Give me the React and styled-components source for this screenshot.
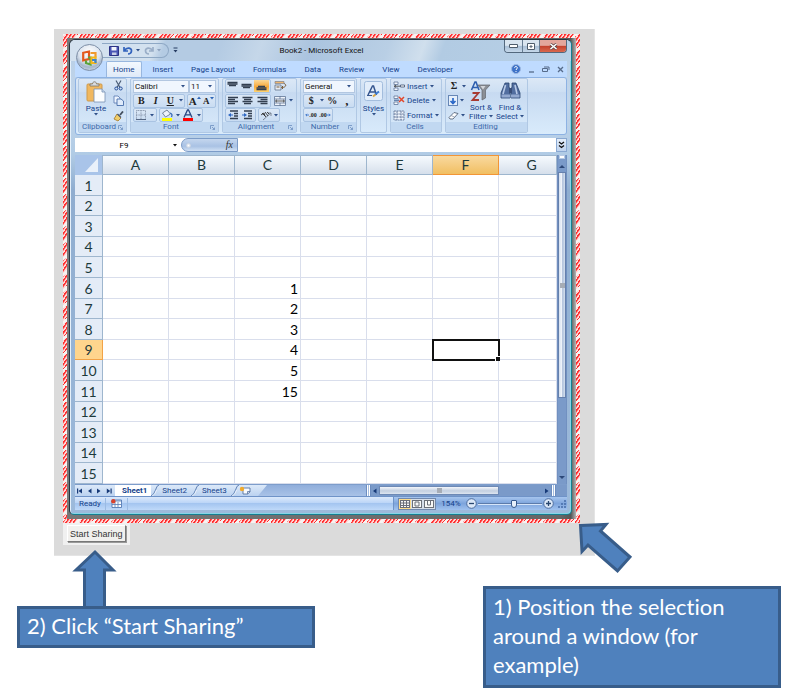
import React from "react";
import styled, { createGlobalStyle, css } from "styled-components";

const ui = 'Roboto, "Open Sans", sans-serif';
const sheet = 'Lato, "Open Sans", sans-serif';
const navy = "#15428b";
const icon = "#2f5088";

const GlobalStyle = createGlobalStyle`
  * { box-sizing: border-box; }
  body { margin: 0; background: #fff; font-family: ${ui}; }
  button, input, select { font: inherit; color: inherit; margin: 0; padding: 0; border: 0; background: none; min-width: 0; }
  svg { display: block; flex: none; }
`;

const Page = styled.main`padding: 29px 12px 6px 17px;`;

const Capture = styled.section`
  margin: 0 186px 0 37px;
  padding: 5px 14px 10px 9px;
  background: #dbdbdb;
  border: 1px solid #e4e4e4;
  border-width: 0 1px 1px 0;
`;

const Selection = styled.div`
  padding: 4px;
  background-color: #f6f3f2;
  background-image:
    linear-gradient(135deg, #f6f3f2 0 2px, transparent 2px 11px, #f6f3f2 11px),
    linear-gradient(135deg, #f6f3f2 0 2px, transparent 2px 11px, #f6f3f2 11px),
    linear-gradient(135deg, #f6f3f2 0 2px, transparent 2px 11px, #f6f3f2 11px),
    linear-gradient(135deg, #f6f3f2 0 2px, transparent 2px 11px, #f6f3f2 11px),
    repeating-linear-gradient(125deg, #ff3030 0 1px, #ffd9d9 2px 3px);
  background-size: 16px 4px, 16px 4px, 4px 16px, 4px 16px, 100% 100%;
  background-position: 0 0, 0 100%, 0 0, 100% 0, 0 0;
  background-repeat: repeat-x, repeat-x, repeat-y, repeat-y, no-repeat;
`;

const Shadow = styled.div`
  padding: 1px 4px 4px 2px;
  background: linear-gradient(90deg, #777 0, #666 97%, #565656 99%, #b5b5b5 100%);
`;

const Window = styled.div`
  position: relative;
  border: 1px solid #26343f;
  border-right-color: #147f91;
  border-bottom-color: #147f91;
  border-radius: 6px 6px 5px 5px;
  padding: 0 4px 4px 5px;
  background: linear-gradient(180deg, #b5cde5 0, #c3d6eb 60px, #b0cbe5 115px, #8fadd0 150px, #9dbadb 100%);
  box-shadow: inset 1px 1px 0 #e5f0fa, inset -1px -1px 0 #86d5e5;
`;

const TitleBar = styled.header`
  display: flex;
  align-items: center;
  height: 21px;
  margin: 0 -4px 0 -5px;
  padding: 0 4px 0 32px;
  border-radius: 5px 5px 0 0;
  background: linear-gradient(110deg, #d3e1ef 0 17%, #b4cbe3 19% 30%, #c5d7e9 38%, #abc4df 48%, #b9cfe5 63%, #d0dfed 70%, #b2cbe3 74%, #b8d0e6 100%);
  font-size: 8px;
  color: #111;
`;

const QuickBar = styled.div`
  display: flex;
  align-items: center;
  gap: 4px;
  height: 15px;
  width: 67px;
  padding-left: 7px;
  border: 1px solid #8ea8c5;
  border-left: 0;
  border-radius: 0 8px 8px 0;
`;

const BareButton = styled.button`
  display: flex;
  align-items: center;
  justify-content: center;
  gap: 3px;
  flex: none;
`;

const WindowTitle = styled.h1`
  flex: 1;
  margin: 0;
  padding-right: 42px;
  text-align: center;
  font-size: 8px;
  line-height: 12px;
  font-weight: 400;
  white-space: nowrap;
`;

const Caption = styled.div`
  display: flex;
  align-self: flex-start;
  height: 13px;
  border: 1px solid #53687d;
  border-top: 0;
  border-radius: 0 0 4px 4px;
  overflow: hidden;
`;

const CaptionButton = styled(BareButton)`
  width: ${(p) => (p.$close ? 27 : 17)}px;
  background: ${(p) => (p.$close
    ? "linear-gradient(#e3a69c 0 45%, #c3402c 50%, #d9694f)"
    : "linear-gradient(#d9e5f0 0 45%, #a9bfd6 50%, #c5d8ea)")};
  border-left: ${(p) => (p.$first ? 0 : "1px solid #667c92")};
`;

const OfficeButton = styled.button`
  position: absolute;
  left: 6px;
  top: 4px;
  width: 27px;
  height: 27px;
  border-radius: 50%;
  border: 1px solid #7d8ea6;
  background: radial-gradient(circle at 50% 30%, #fff 0, #dbe3ee 50%, #a5b6cc 68%, #e9f2fb 100%);
  display: flex;
  align-items: center;
  justify-content: center;
`;

const Tabs = styled.nav`
  display: flex;
  gap: 4px;
  height: 16px;
  padding: 0 3px 0 31px;
  background: #bfdbff;
  align-items: stretch;
`;

const Tab = styled.button`
  padding: 0 7px;
  font-size: 8px;
  line-height: 15px;
  color: ${navy};
  white-space: nowrap;
  ${(p) => p.$active && css`
    background: linear-gradient(#f3f8fe, #dfeaf8);
    border: 1px solid #98b7df;
    border-bottom: 0;
    border-radius: 2px 2px 0 0;
    padding: 0 6px;
    line-height: 14px;
  `}
`;

const TabTools = styled.div`
  margin-left: auto;
  display: flex;
  align-items: center;
  gap: 7px;
`;

const Ribbon = styled.div`
  display: flex;
  gap: 3px;
  height: 58px;
  padding: 0 2px 1px;
  border: 1px solid #8db2e3;
  border-radius: 3px;
  background: linear-gradient(#dce8f6 0, #cddff3 25%, #c7daf1 26%, #d9ebfb 100%);
`;

const Group = styled.section`
  display: flex;
  flex-direction: column;
  width: ${(p) => p.$w}px;
  border: 1px solid #b0c8e4;
  border-radius: 2px;
  overflow: hidden;
  flex: none;
`;

const GroupBody = styled.div`
  flex: 1;
  display: flex;
  gap: ${(p) => p.$gap || 2}px;
  padding: 0 2px;
  min-height: 0;
`;

const GroupName = styled.h2`
  display: flex;
  align-items: center;
  margin: 0;
  padding: 0 3px 0 1px;
  height: 10px;
  background: #c1d8f1;
  color: #3e6aaa;
  font-size: 8px;
  font-weight: 400;
  line-height: 10px;
  span { flex: 1; text-align: center; }
`;

const Stack = styled.div`
  display: flex;
  flex-direction: column;
  flex: ${(p) => (p.$grow ? 1 : "none")};
  justify-content: space-between;
`;

const Line = styled.div`
  display: flex;
  align-items: center;
  gap: ${(p) => p.$gap || 0}px;
  height: 14px;
`;

const Cluster = styled.div`
  display: flex;
  align-items: center;
  justify-content: space-around;
  height: 14px;
  width: ${(p) => p.$w}px;
  border: 1px solid #a9c3e2;
  border-radius: 2px;
  background: linear-gradient(#dce8f6, #c9dcf2);
`;

const Tool = styled(BareButton)`
  height: 12px;
  min-width: 12px;
  gap: 0;
  font-family: "Liberation Serif", serif;
  font-size: ${(p) => p.$size || 10}px;
  font-weight: 700;
  line-height: 12px;
  color: #222;
  font-style: ${(p) => (p.$italic ? "italic" : "normal")};
  text-decoration: ${(p) => (p.$underline ? "underline" : "none")};
  ${(p) => p.$on && css`background: linear-gradient(#fbd898, #f7a93b 55%, #fdd372); min-width: 15px;`}
`;

const LabelTool = styled(BareButton)`
  height: 14px;
  justify-content: flex-start;
  font-size: 8px;
  color: ${navy};
  gap: 2px;
`;

const TallButton = styled.button`
  display: flex;
  flex-direction: column;
  align-items: center;
  width: ${(p) => p.$w}px;
  flex: none;
  padding-top: 2px;
  font-size: 8px;
  line-height: 9px;
  color: ${navy};
`;

const TallLabel = styled.span`
  display: flex;
  align-items: center;
  gap: 2px;
  padding-top: ${(p) => p.$space || 0}px;
  white-space: nowrap;
`;

const PickerBox = styled.label`
  display: flex;
  align-items: center;
  width: ${(p) => p.$w}px;
  height: 13px;
  padding: 0 3px 0 1px;
  background: #f0f6fe;
  border: 1px solid #b3c7e1;
  font-size: 8px;
  color: #111;
  select { flex: 1; appearance: none; line-height: 11px; height: 11px; }
`;

const FormulaBar = styled.div`
  display: flex;
  height: 14px;
  margin: 3px 0;
  background: #fff;
  font-size: 8px;
`;

const NameBox = styled.label`
  display: flex;
  align-items: center;
  width: 106px;
  padding-right: 4px;
  input { flex: 1; text-align: center; outline: 0; height: 14px; }
`;

const FunctionPill = styled.div`
  display: flex;
  align-items: center;
  justify-content: space-between;
  width: 57px;
  padding: 0 4px;
  border: 1px solid #7c9cc8;
  border-radius: 8px 0 0 8px;
  background: linear-gradient(#c4d6ee, #a9c2e4 60%, #d0e0f4);
  font: italic 10px/12px "Liberation Serif", serif;
  color: #333;
`;

const Knob = styled.span`
  width: 5px;
  height: 5px;
  border-radius: 50%;
  background: radial-gradient(#fff, #a4b7d2);
`;

const FormulaInput = styled.input`flex: 1; outline: 0;`;

const Expand = styled(BareButton)`
  width: 11px;
  border: 1px solid #8aa9d2;
  background: linear-gradient(#e4eefa, #bfd3ee);
`;

const Workbook = styled.div`display: flex; background: #fff;`;

const Grid = styled.table`
  flex: 1;
  width: 100%;
  table-layout: fixed;
  border-collapse: separate;
  border-spacing: 0;
  font-family: ${sheet};
  font-size: 14px;
  line-height: 17px;
  color: #000;
`;

const Col = styled.col`width: ${(p) => p.$w}px;`;

const HeadRow = styled.tr`height: 20px;`;

const Row = styled.tr`
  height: 21px;
  &:nth-child(5n + 2), &:nth-child(5n + 4) { height: 20px; }
`;

const Corner = styled.td`
  padding: 0;
  background: #a9c4e9;
  border-right: 1px solid #9eb6ce;
  svg { margin-left: auto; margin-right: 3px; }
`;

const ColHead = styled.th`
  padding: ${(p) => (p.$cut ? "0 0 1px 8px" : "0 0 1px")};
  font-weight: 400;
  color: #1d3a3c;
  border: solid #9eb6ce;
  border-width: 1px 1px 1px 0;
  background: linear-gradient(#f6fafe, #d6dfeb);
  ${(p) => p.$on && css`background: linear-gradient(#f9d99f, #f1bf62); border-color: #f29536;`}
`;

const RowHead = styled.th`
  padding: 0;
  font-weight: 400;
  color: #1d3a3c;
  background: #e4ecf7;
  border: solid #9eb6ce;
  border-width: 0 1px 1px 0;
  ${(p) => p.$on && css`background: #ffd58d; border-color: #f2a347;`}
`;

const Cell = styled.td`
  padding: 0 2px 0 0;
  text-align: right;
  border: solid #d9deec;
  border-width: 0 1px 1px 0;
  ${(p) => p.$on && css`
    position: relative;
    outline: 2px solid #111;
    outline-offset: -1px;
    &::after {
      content: "";
      position: absolute;
      right: -2px;
      bottom: -2px;
      width: 4px;
      height: 4px;
      background: #111;
      border: solid #fff;
      border-width: 1px 0 0 1px;
    }
  `}
`;

const VScroll = styled.div`
  display: flex;
  flex-direction: column;
  align-items: center;
  width: 10px;
  border: solid #7190c0;
  border-width: 0 1px;
  background: #7a9ac9;
`;

const SplitBox = styled.span`
  width: 6px;
  height: 4px;
  background: #fff;
  border: 1px solid #b8cbe4;
`;

const ScrollArrow = styled(BareButton)`width: 8px; height: 13px;`;

const VThumb = styled.button`
  display: flex;
  align-items: center;
  justify-content: center;
  width: 8px;
  height: 226px;
  border: 1px solid #6580ad;
  background: linear-gradient(90deg, #d3dfef, #f0f4fa 45%, #b0c1db 60%, #d5e0ef);
`;

const Grip = styled.span`
  width: 5px;
  height: 5px;
  background: #a6acb5;
`;

const SheetBar = styled.div`
  display: flex;
  align-items: center;
  height: 12px;
  background: linear-gradient(#90aedb, #a9c2e7);
  border-top: 1px solid #7d9dcb;
`;

const SheetTabs = styled.div`
  display: flex;
  align-items: center;
  height: 11px;
  width: 192px;
  background: linear-gradient(#dce9f9, #bbd2f0);
  clip-path: polygon(0 0, 100% 0, 183px 100%, 0 100%);
`;

const SheetNav = styled.div`
  display: flex;
  justify-content: space-around;
  width: 41px;
  height: 11px;
  padding-right: 1px;
  border-right: 1px solid #fff;
`;

const SheetTab = styled.button`
  height: 11px;
  padding: 0 4px 0 ${(p) => (p.$active ? 6 : 3)}px;
  background: ${(p) => (p.$active ? "#fff" : "none")};
  font-size: 8px;
  line-height: 10px;
  font-weight: ${(p) => (p.$active ? 700 : 400)};
  color: ${navy};
`;

const HScroll = styled.div`
  flex: 1;
  display: flex;
  align-items: center;
  height: 11px;
  margin-left: 99px;
  padding-right: 11px;
  background: #7a9ac9;
`;

const HSplit = styled.span`
  width: 5px;
  height: 11px;
  border: solid #6d8dbf;
  border-width: 0 1px;
  background: linear-gradient(90deg, #fff 1px, #a5bde0 1px 2px, #fff 2px);
`;

const HThumb = styled.button`
  display: flex;
  align-items: center;
  justify-content: center;
  height: 9px;
  width: 120px;
  border: 1px solid #6d89b5;
  background: linear-gradient(#f3f6fb, #c3cfe0 55%, #dde5f0);
`;

const Spacer = styled.span`flex: 1;`;

const StatusBar = styled.footer`
  display: flex;
  align-items: center;
  height: 14px;
  border-top: 1px solid #6f93c8;
  background: linear-gradient(#dbe9fb, #bcd5f7 45%, #a4c5f0 50%, #bfd9f9);
  font-size: 8px;
  color: ${navy};
`;

const StatusText = styled.span`
  width: 31px;
  padding-left: 4px;
  border-right: 1px solid #9bbbe3;
  line-height: 12px;
`;

const MacroButton = styled(BareButton)`
  width: 22px;
  height: 12px;
  border-right: 1px solid #9bbbe3;
`;

const StatusTools = styled.div`
  display: flex;
  align-items: center;
  margin-left: auto;
  width: 174px;
  height: 13px;
  padding-left: 4px;
  background: linear-gradient(#a6c5ee, #7da4dc 50%, #a0c2ef);
  border-left: 1px solid #6f93c8;
`;

const Views = styled.div`
  display: flex;
  border: 1px solid #7189ae;
  background: #d5dde9;
`;

const ViewButton = styled(BareButton)`
  width: 12px;
  height: 10px;
  background: ${(p) => (p.$on ? "#fddc8c" : "none")};
`;

const ZoomText = styled.output`width: 30px; text-align: center;`;

const ZoomRange = styled.input`
  flex: 1;
  appearance: none;
  height: 10px;
  margin: 0 1px;
  background: linear-gradient(transparent 4px, #5c7bab 4px 5px, #d7e6fa 5px 6px, transparent 6px);
  &::-webkit-slider-thumb {
    appearance: none;
    width: 6px;
    height: 8px;
    border: 1px solid #35588d;
    border-radius: 1px 1px 3px 3px;
    background: #e7effa;
  }
`;

const Actions = styled.div`
  display: flex;
  width: fit-content;
  padding: 2px 4px 3px;
  background: #f0f0f0;
`;

const ShareButton = styled.button`
  height: 17px;
  padding: 0 2px;
  background: #f1f0ee;
  border: 1px solid #fff;
  border-right-color: #777;
  border-bottom-color: #777;
  box-shadow: 1px 1px 0 #999;
  font-family: "Liberation Sans", Arial, sans-serif;
  font-size: 9px;
  line-height: 14px;
  color: #333;
  white-space: nowrap;
`;

const Notes = styled.div`
  display: flex;
  align-items: flex-start;
  justify-content: space-between;
  padding-top: 30px;
`;

const Note = styled.aside`
  position: relative;
  width: 298px;
  min-height: 42px;
  margin-top: ${(p) => p.$drop || 0}px;
  padding: ${(p) => (p.$drop ? "2px 7px 5px" : "3px 7px 6px")};
  border: 3px solid #385d8a;
  background: #4f81bd;
  color: #fff;
  font-family: ${sheet};
  font-size: 22px;
  font-variant-ligatures: none;
  line-height: 29px;
`;

const UpArrow = styled.svg`position: absolute; left: 51px; top: -60px;`;
const CornerArrow = styled.svg`position: absolute; left: 89px; top: -70px;`;

const Caret = ({ c = icon }) => (
  <svg width="4" height="3" viewBox="0 0 4 3"><path d="M0 0h4L2 2.4z" fill={c} /></svg>
);
const Launcher = () => (
  <svg width="5" height="5" viewBox="0 0 5 5"><path d="M.5 4V.5H4M2 2l2.5 2.5M4.500 2.500v2h-2" stroke="#6c8fc0" strokeWidth=".8" fill="none" /></svg>
);
const Lines = ({ rows, indent = "none" }) => (
  <svg width="11" height="10" viewBox="0 0 11 10">
    {rows.map(([x, y, w]) => <path key={y} d={`M${x} ${y}h${w}`} stroke="#333f50" strokeWidth="1.300" />)}
    {indent !== "none" && <path d={indent === "left" ? "M0 5l3-2v1.400h2v1.200h-2v1.400z" : "M5 5l-3-2v1.400h-2v1.200h2v1.400z"} fill="#2b67c4" />}
  </svg>
);
const left = [[0, 1.5, 10], [0, 3.5, 7], [0, 5.5, 10], [0, 7.5, 7]];
const mid = [[0.5, 1.5, 10], [2, 3.5, 7], [0.5, 5.5, 10], [2, 7.5, 7]];
const right = [[0.5, 1.5, 10], [3.5, 3.5, 7], [0.5, 5.5, 10], [3.5, 7.5, 7]];
const topRows = [[0.5, 1.5, 10], [0.5, 3, 10], [2, 4.5, 7]];
const midRows = [[0.5, 3.5, 10], [0.5, 5, 10], [2, 6.5, 7]];
const bottomRows = [[2, 5.5, 7], [0.5, 7, 10], [0.5, 8.5, 10]];
const indented = [[2, 1, 8], [6, 3.500, 4], [6, 6, 4], [2, 8.500, 8]];

const Wrap = () => (
  <svg width="13" height="12" viewBox="0 0 13 12"><path d="M1 1.500h9v2H1z" fill="#efb66e" stroke="#7e838c" strokeWidth=".7" /><path d="M1 5h6v5H1z" fill="#e8edf4" stroke="#61728b" strokeWidth=".8" /><path d="M10 3.500c3 1 2 4-2 4M9 6L7.500 7.500 9 9M2.500 7h3" fill="none" stroke="#7a5b35" /></svg>
);
const Merge = () => (
  <svg width="12" height="10" viewBox="0 0 12 10"><path d="M.5.5h11v9H.5zM.5 3h11M.5 7h11M6 0v3M6 7v3" fill="#eef3fa" stroke="#5f7596" strokeWidth=".8" /><path d="M1.500 5h9M3 3.700L1.500 5 3 6.300M9 3.700L10.500 5 9 6.300" stroke="#333" fill="none" strokeWidth=".8" /></svg>
);
const Orient = () => (
  <svg width="13" height="11" viewBox="0 0 13 11"><path d="M3 10L11 3M11 3v3M11 3H8" stroke="#7c8796" fill="none" /><path d="M1 5l3-2 1 3M2 3l4 4M5 2l3 4M7 2l2 2" stroke="#333" fill="none" strokeWidth=".9" /></svg>
);
const Paste = () => (
  <svg width="20" height="22" viewBox="0 0 20 22"><rect x="1" y="3" width="15" height="17" rx="1" fill="#f0b860" stroke="#cf9a4c" /><path d="M4 5V3h2.500c0-3 4-3 4 0H13v2z" fill="#d8dce2" stroke="#7d7565" strokeWidth=".8" /><path d="M8 8h8l3 3v10H8z" fill="#fbfdff" stroke="#7791b3" strokeWidth=".8" /><path d="M16 8v3h3" fill="#cbdcf1" stroke="#7791b3" strokeWidth=".8" /></svg>
);
const Cut = () => (
  <svg width="11" height="11" viewBox="0 0 11 11"><path d="M3 .5l4 7M8 .5l-4 7" stroke="#4d5f79" strokeWidth="1.200" /><circle cx="3.300" cy="8.500" r="1.500" fill="none" stroke="#264e9b" /><circle cx="7.700" cy="8.500" r="1.500" fill="none" stroke="#264e9b" /></svg>
);
const Copy = () => (
  <svg width="11" height="11" viewBox="0 0 11 11"><path d="M1 1h4l2 2v5H1z" fill="#eef5ff" stroke="#6382b5" strokeWidth=".9" /><path d="M4 4h4l2.500 2v4.500H4z" fill="#dfebfb" stroke="#476da9" strokeWidth=".9" /></svg>
);
const Brush = () => (
  <svg width="11" height="11" viewBox="0 0 11 11"><path d="M7 4L10 .5" stroke="#414c5b" strokeWidth="1.800" /><path d="M4 3l4 4-3 3-4-2z" fill="#efce6b" stroke="#a57624" strokeWidth=".8" /><path d="M4.500 3l3.500 3.500" stroke="#4b5972" strokeWidth="1.300" /></svg>
);
const Borders = () => (
  <svg width="10" height="10" viewBox="0 0 10 10"><path d="M.5.5h9v9h-9zM5 0v10M0 5h10" fill="none" stroke="#8b99ae" strokeDasharray="1 .6" /><path d="M0 9.500h10" stroke="#566885" /></svg>
);
const Bucket = () => (
  <svg width="12" height="12" viewBox="0 0 12 12"><path d="M1.500 4L6 1l3.500 4-5 3z" fill="#eef3fa" stroke="#5c6c85" strokeWidth=".8" /><path d="M9 4q3 1 1.500 4" fill="none" stroke="#376bb8" strokeWidth="1.300" /><path d="M1 9h10v3H1z" fill="#ff0" /></svg>
);
const FontColor = () => (
  <svg width="12" height="12" viewBox="0 0 12 12"><path d="M2 8.500L5.500 1h1L10 8.500M3.500 5.800h5" fill="none" stroke="#284783" strokeWidth="1.300" /><path d="M1 9h10v3H1z" fill="#f00" /></svg>
);
const Grow = ({ down }) => (
  <svg width="4" height="9" viewBox="0 0 4 9"><path d={down ? "M0 1h4L2 3.500z" : "M0 3h4L2 .5z"} fill="#2e66b8" /></svg>
);
const DecimalArrow = ({ flip }) => (
  <svg width="4" height="4" viewBox="0 0 5 4"><path d={flip ? "M0 2h4M2.500.5L4 2 2.500 3.500" : "M5 2H1M2.500.5L1 2l1.500 1.500"} fill="none" stroke="#2b67c4" /></svg>
);
const StylesIcon = () => (
  <svg width="19" height="20" viewBox="0 0 19 20"><rect x=".5" y=".5" width="18" height="19" rx="2" fill="#e2edfa" stroke="#a3bddd" /><path d="M4 14L8.500 5h1l3 9M6 11h6" stroke="#36568f" strokeWidth="1.500" fill="none" /><path d="M3 14.500h5" stroke="#36568f" /><path d="M11 13.500l4-3" stroke="#3b7bd0" strokeWidth="2" /><path d="M9 15.500l2.500-2" stroke="#dda63d" strokeWidth="1.800" /></svg>
);
const CellIcon = ({ kind }) => (
  <svg width="12" height="11" viewBox="0 0 12 11">
    {kind === "format"
      ? <path d="M1 1h10v9H1zM1 4h10M4 1v9M8 1v9M1 7h10" fill="#f1f6fd" stroke="#62779a" strokeWidth=".9" strokeDasharray="2 .6" />
      : <path d="M1 1h4v2.500H1zM1 7h4v2.500H1z" fill="#f4f8fe" stroke="#62779a" strokeWidth=".8" />}
    {kind === "insert" && <><path d="M11.500 4H7.500v2h4z" fill="#fff" stroke="#3c4e6c" strokeWidth=".8" /><path d="M1 5.200h6M3 4L1.500 5.200 3 6.400" stroke="#333" fill="none" strokeWidth=".8" /></>}
    {kind === "delete" && <><path d="M1 5.200h5" stroke="#3d5e92" /><path d="M6 2l5 5M11 2L6 7" stroke="#e2472b" strokeWidth="1.500" /></>}
  </svg>
);
const FillDown = () => (
  <svg width="10" height="11" viewBox="0 0 10 11"><rect x=".5" y=".5" width="9" height="10" fill="#e5effb" stroke="#6787b6" /><path d="M5 3v5M2.500 6L5 8.500 7.500 6" stroke="#2b68c8" strokeWidth="1.700" fill="none" /></svg>
);
const Eraser = () => (
  <svg width="11" height="9" viewBox="0 0 11 9"><path d="M1 6.500L6 1.500l4 1L5 8H2z" fill="#fff" stroke="#55647b" strokeWidth=".9" /><path d="M3 4.500l3.500 1.500" stroke="#8b98ab" strokeWidth=".8" /></svg>
);
const Sort = () => (
  <svg width="22" height="21" viewBox="0 0 22 21"><path d="M1.500 9L5 1h1l3 8M3 6.500h5" stroke="#2e5fb0" strokeWidth="1.600" fill="none" /><path d="M2.500 12h6l-6 7h6.500" stroke="#a83a31" strokeWidth="1.800" fill="none" /><path d="M8 4h12l-4.500 5v8L12 19V9z" fill="#8b8f96" stroke="#62666f" strokeWidth=".7" /><path d="M10.500 5h5L13 8.500z" fill="#d2d5da" /></svg>
);
const Binoculars = () => (
  <svg width="21" height="21" viewBox="0 0 21 21"><path d="M5 2h4v4l1 2v9H1v-5zM12 2h4l4 10v5h-9V8l1-2z" fill="#526e9f" stroke="#29446f" strokeWidth=".8" /><path d="M9 7h3v5H9z" fill="#3a4f78" /><path d="M5.500 4L3 13M15 4l2 9" stroke="#b9cbe8" strokeWidth="1.600" /><path d="M1.500 13.500H10v3H1.500zM11 13.500h8.500v3H11z" fill="#93a9cf" /></svg>
);
const Logo = () => (
  <svg width="19" height="19" viewBox="0 0 19 19" fill="none" strokeWidth="2.200"><path d="M9 3.500L3.200 4.800v7.500L9 11z" stroke="#e4591c" /><path d="M10.500 5h5v4.500" stroke="#f09a2e" /><path d="M6 12.500V15l4.500 1.500V9.500H8" stroke="#5ba33c" /><path d="M11.500 9.500h4v5.500h-4z" stroke="#f2b51d" /><path d="M12 12h3.500v3" stroke="#3b84cf" /></svg>
);
const Save = () => (
  <svg width="10" height="10" viewBox="0 0 10 10"><path d="M.5.5h9v9h-9z" fill="#4a55b5" stroke="#2d3385" /><path d="M2.500 1h5v3.500h-5z" fill="#f2f5fc" /><path d="M3 6.500h4.500V9H3z" fill="#c9d0e8" /></svg>
);
const Undo = ({ c, flip }) => (
  <svg width="10" height="9" viewBox="0 0 10 9"><path d={flip ? "M9 1v4H5M8.500 4.500C6 .5 1 2 1.500 5c.2 2 2 3 3.500 3" : "M1 1v4h4M1.500 4.500C4 .5 9 2 8.500 5 8.300 7 7 8 5 8"} fill="none" stroke={c} strokeWidth="1.700" /></svg>
);
const NavIcon = ({ kind }) => (
  <svg width="6" height="6" viewBox="0 0 6 6"><path d={{ first: "M0 .5h1.200v5H0zM5 .5v5L1.500 3z", prev: "M4.500 .5v5L1 3z", next: "M1 .5v5L4.500 3z", last: "M4.500 .5h1.200v5H4.500zM.8.5v5L4.300 3z" }[kind]} fill="#173a78" /></svg>
);
const Slash = () => (
  <svg width="8" height="11" viewBox="0 0 8 11"><path d="M0 11Q3 10 4.500 5T8 0" fill="none" stroke="#5f81b6" /><path d="M1 11Q4 10 5.500 5" fill="none" stroke="#fff" strokeWidth=".7" /></svg>
);
const NewSheet = () => (
  <svg width="12" height="9" viewBox="0 0 12 9"><path d="M4 2h7v4L8.500 8H4z" fill="#f7fafe" stroke="#58749f" strokeWidth=".9" /><path d="M11 5.500H8.500V8" fill="none" stroke="#58749f" strokeWidth=".8" /><circle cx="3" cy="3" r="2.200" fill="#efaa2f" /></svg>
);
const Macro = () => (
  <svg width="11" height="9" viewBox="0 0 11 9"><path d="M1 1h9.500v7.500H1z" fill="#f9fbfe" stroke="#547bb4" strokeWidth=".9" /><path d="M1 2h9.500M4 3v5M7 3v5M1 5.500h9" stroke="#547bb4" strokeWidth=".8" /><circle cx="2.300" cy="2.300" r="2.200" fill="#d8432e" /></svg>
);
const ViewIcon = ({ kind }) => (
  <svg width="10" height="8" viewBox="0 0 10 8"><rect x=".5" y=".5" width="9" height="7" fill="#f8f8f8" stroke="#6b6f78" /><path d={{ grid: "M3.500 0v8M6.500 0v8M0 3h10M0 5.500h10", page: "M3 2h4v4H3z", split: "M3.500 0v5h3V0" }[kind]} fill="none" stroke="#6b6f78" /></svg>
);
const RoundIcon = ({ plus }) => (
  <svg width="11" height="11" viewBox="0 0 11 11"><circle cx="5.500" cy="5.500" r="4.800" fill="#dce8f8" stroke="#4d6c9d" /><path d={plus ? "M3 5.500h5M5.500 3v5" : "M3 5.500h5"} stroke="#29476f" strokeWidth="1.300" /></svg>
);

const Dropdown = ({ w, label, value }) => (
  <PickerBox $w={w}><select aria-label={label}><option>{value}</option></select><Caret /></PickerBox>
);

const columns = ["A", "B", "C", "D", "E", "F", "G"];
const values = { 6: "1", 7: "2", 8: "3", 9: "4", 10: "5", 11: "15" };
const tabs = ["Home", "Insert", "Page Layout", "Formulas", "Data", "Review", "View", "Developer"];

function RibbonGroups() {
  return (
    <Ribbon>
      <Group $w={49}>
        <GroupBody $gap={1}>
          <TallButton $w={30}><Paste /><TallLabel $space={1}>Paste</TallLabel><Caret /></TallButton>
          <Stack>
            <Tool aria-label="Cut"><Cut /></Tool>
            <Tool aria-label="Copy"><Copy /></Tool>
            <Tool aria-label="Format Painter"><Brush /></Tool>
          </Stack>
        </GroupBody>
        <GroupName><span>Clipboard</span><Launcher /></GroupName>
      </Group>
      <Group $w={89}>
        <GroupBody>
          <Stack $grow>
            <Line><Dropdown w={56} label="Font" value="Calibri" /><Dropdown w={27} label="Font size" value="11" /></Line>
            <Line $gap={2}>
              <Cluster $w={52}><Tool>B</Tool><Tool $italic>I</Tool><Tool $underline>U</Tool><Caret /></Cluster>
              <Cluster $w={29}><Tool $size={11}>A<Grow /></Tool><Tool $size={9}>A<Grow down /></Tool></Cluster>
            </Line>
            <Line $gap={2}>
              <Cluster $w={24}><Borders /><Caret /></Cluster>
              <Cluster $w={44}><Bucket /><Caret /><FontColor /><Caret /></Cluster>
            </Line>
          </Stack>
        </GroupBody>
        <GroupName><span>Font</span><Launcher /></GroupName>
      </Group>
      <Group $w={75}>
        <GroupBody>
          <Stack $grow>
            <Line $gap={3}>
              <Cluster $w={46}>
                <Tool aria-label="Top align"><Lines rows={topRows} /></Tool>
                <Tool aria-label="Middle align"><Lines rows={midRows} /></Tool>
                <Tool $on aria-label="Bottom align"><Lines rows={bottomRows} /></Tool>
              </Cluster>
              <Wrap />
            </Line>
            <Line $gap={3}>
              <Cluster $w={46}>
                <Tool aria-label="Align left"><Lines rows={left} /></Tool>
                <Tool aria-label="Center"><Lines rows={mid} /></Tool>
                <Tool aria-label="Align right"><Lines rows={right} /></Tool>
              </Cluster>
              <Merge /><Caret />
            </Line>
            <Line $gap={2}>
              <Cluster $w={31}>
                <Tool aria-label="Decrease indent"><Lines rows={indented} indent="left" /></Tool>
                <Tool aria-label="Increase indent"><Lines rows={indented} indent="right" /></Tool>
              </Cluster>
              <Cluster $w={22}><Orient /><Caret /></Cluster>
            </Line>
          </Stack>
        </GroupBody>
        <GroupName><span>Alignment</span><Launcher /></GroupName>
      </Group>
      <Group $w={57}>
        <GroupBody>
          <Stack $grow>
            <Line><Dropdown w={52} label="Number format" value="General" /></Line>
            <Line><Cluster $w={52}><Tool>$</Tool><Caret /><Tool>%</Tool><Tool $size={13}>,</Tool></Cluster></Line>
            <Line><Cluster $w={30}><Tool $size={6}><DecimalArrow />.00</Tool><Tool $size={6}>.00<DecimalArrow flip /></Tool></Cluster></Line>
          </Stack>
        </GroupBody>
        <GroupName><span>Number</span><Launcher /></GroupName>
      </Group>
      <Group $w={27}>
        <GroupBody><TallButton $w={21}><StylesIcon /><TallLabel $space={3}>Styles</TallLabel><Caret /></TallButton></GroupBody>
      </Group>
      <Group $w={52}>
        <GroupBody $gap={1}>
          <Stack>
            {["Insert", "Delete", "Format"].map((t) => (
              <LabelTool key={t}><CellIcon kind={t.toLowerCase()} />{t} <Caret /></LabelTool>
            ))}
          </Stack>
        </GroupBody>
        <GroupName><span>Cells</span></GroupName>
      </Group>
      <Group $w={83}>
        <GroupBody $gap={1}>
          <Stack>
            <LabelTool aria-label="Sum"><Tool as="span">Σ</Tool><Caret /></LabelTool>
            <LabelTool aria-label="Fill"><FillDown /><Caret /></LabelTool>
            <LabelTool aria-label="Clear"><Eraser /><Caret /></LabelTool>
          </Stack>
          <TallButton $w={28}><Sort /><TallLabel $space={1}>Sort &amp;</TallLabel><TallLabel>Filter <Caret /></TallLabel></TallButton>
          <TallButton $w={28}><Binoculars /><TallLabel $space={1}>Find &amp;</TallLabel><TallLabel>Select <Caret /></TallLabel></TallButton>
        </GroupBody>
        <GroupName><span>Editing</span></GroupName>
      </Group>
    </Ribbon>
  );
}

export default function App() {
  return (
    <Page>
      <GlobalStyle />
      <Capture>
        <Selection>
          <Shadow>
            <Window>
              <TitleBar>
                <QuickBar>
                  <BareButton aria-label="Save"><Save /></BareButton>
                  <BareButton aria-label="Undo"><Undo c="#3263bd" /><Caret /></BareButton>
                  <BareButton aria-label="Redo"><Undo c="#9aaec8" flip /><Caret c="#8ea2bd" /></BareButton>
                </QuickBar>
                <BareButton aria-label="Customize">
                  <svg width="12" height="7" viewBox="0 0 12 7"><path d="M4.500 1h4" stroke="#263c62" /><path d="M4.500 3h4l-2 2.500z" fill="#263c62" /></svg>
                </BareButton>
                <WindowTitle>Book2 - Microsoft Excel</WindowTitle>
                <Caption>
                  <CaptionButton $first aria-label="Minimize"><svg width="9" height="4"><path d="M.5.5h8v3h-8z" fill="#fff" stroke="#4e5d6c" /></svg></CaptionButton>
                  <CaptionButton aria-label="Restore"><svg width="8" height="7"><path d="M.5.5h7v6h-7zM3 3h2v1H3z" fill="#fff" stroke="#4e5d6c" /></svg></CaptionButton>
                  <CaptionButton $close aria-label="Close"><svg width="9" height="7"><path d="M1.500 1l6 5M7.500 1l-6 5" stroke="#5f4748" strokeWidth="3" /><path d="M1.500 1l6 5M7.500 1l-6 5" stroke="#fff" strokeWidth="1.600" /></svg></CaptionButton>
                </Caption>
              </TitleBar>
              <OfficeButton aria-label="Office"><Logo /></OfficeButton>
              <Tabs>
                {tabs.map((t, i) => <Tab key={t} $active={i === 0}>{t}</Tab>)}
                <TabTools>
                  <BareButton aria-label="Help"><svg width="10" height="10"><circle cx="5" cy="5" r="4.500" fill="#3d72c8" stroke="#9db9e2" /><path d="M3.500 3.700C3.700 2 6.600 2.200 6.300 4 6.200 5 5 5 5 6M5 7v1" fill="none" stroke="#fff" /></svg></BareButton>
                  <BareButton aria-label="Minimize workbook"><svg width="7" height="7"><path d="M1 6h5" stroke="#566b8a" strokeWidth="1.300" /></svg></BareButton>
                  <BareButton aria-label="Restore workbook"><svg width="8" height="7"><path d="M2 1h5v3M.5 2.500h5v3h-5z" fill="none" stroke="#566b8a" /></svg></BareButton>
                  <BareButton aria-label="Close workbook"><svg width="7" height="7"><path d="M1 1l5 5M6 1L1 6" stroke="#566b8a" strokeWidth="1.300" /></svg></BareButton>
                </TabTools>
              </Tabs>
              <RibbonGroups />
              <FormulaBar>
                <NameBox><input aria-label="Name box" defaultValue="F9" /><Caret c="#111" /></NameBox>
                <FunctionPill><Knob />fx</FunctionPill>
                <FormulaInput aria-label="Formula" />
                <Expand aria-label="Expand formula bar"><svg width="7" height="8"><path d="M1 1l2.500 2L6 1M1 4.500l2.500 2 2.500-2" fill="none" stroke="#111" strokeWidth="1.300" /></svg></Expand>
              </FormulaBar>
              <Workbook>
                <Grid>
                  <colgroup><Col $w={28} />{columns.slice(0, 6).map((c) => <Col key={c} $w={66} />)}<col /></colgroup>
                  <thead>
                    <HeadRow>
                      <Corner><svg width="14" height="14"><path d="M13 0v14H0z" fill="#eaf1fa" /></svg></Corner>
                      {columns.map((c) => <ColHead key={c} $on={c === "F"} $cut={c === "G"}>{c}</ColHead>)}
                    </HeadRow>
                  </thead>
                  <tbody>
                    {Array.from({ length: 15 }, (_, i) => i + 1).map((r) => (
                      <Row key={r}>
                        <RowHead $on={r === 9}>{r}</RowHead>
                        {columns.map((c) => <Cell key={c} $on={r === 9 && c === "F"}>{c === "C" ? values[r] : null}</Cell>)}
                      </Row>
                    ))}
                  </tbody>
                </Grid>
                <VScroll>
                  <SplitBox />
                  <ScrollArrow aria-label="Scroll up"><svg width="6" height="4"><path d="M0 4l3-3 3 3z" fill="#2c4878" /></svg></ScrollArrow>
                  <VThumb aria-label="Vertical scroll"><Grip /></VThumb>
                  <Spacer />
                  <ScrollArrow aria-label="Scroll down"><svg width="6" height="4"><path d="M0 0l3 3 3-3z" fill="#2c4878" /></svg></ScrollArrow>
                </VScroll>
              </Workbook>
              <SheetBar>
                <SheetTabs>
                  <SheetNav>{["first", "prev", "next", "last"].map((k) => <BareButton key={k} aria-label={k}><NavIcon kind={k} /></BareButton>)}</SheetNav>
                  <SheetTab $active>Sheet1</SheetTab><Slash />
                  <SheetTab>Sheet2</SheetTab><Slash />
                  <SheetTab>Sheet3</SheetTab><Slash />
                  <BareButton aria-label="Insert sheet"><NewSheet /></BareButton>
                </SheetTabs>
                <HScroll>
                  <HSplit />
                  <ScrollArrow aria-label="Scroll left"><NavIcon kind="prev" /></ScrollArrow>
                  <HThumb aria-label="Horizontal scroll"><Grip /></HThumb>
                  <Spacer />
                  <ScrollArrow aria-label="Scroll right"><NavIcon kind="next" /></ScrollArrow>
                  <HSplit />
                </HScroll>
              </SheetBar>
              <StatusBar>
                <StatusText>Ready</StatusText>
                <MacroButton aria-label="Record macro"><Macro /></MacroButton>
                <StatusTools>
                  <Views>{["grid", "page", "split"].map((k) => <ViewButton key={k} $on={k === "grid"} aria-label={k}><ViewIcon kind={k} /></ViewButton>)}</Views>
                  <ZoomText>154%</ZoomText>
                  <BareButton aria-label="Zoom out"><RoundIcon /></BareButton>
                  <ZoomRange type="range" min="0" max="100" defaultValue="57" aria-label="Zoom" />
                  <BareButton aria-label="Zoom in"><RoundIcon plus /></BareButton>
                  <svg width="13" height="11"><path d="M10 3h2M7 6h2M10 6h2M4 9h2M7 9h2M10 9h2" stroke="#456ca8" strokeWidth="1.500" /></svg>
                </StatusTools>
              </StatusBar>
            </Window>
          </Shadow>
        </Selection>
        <Actions><ShareButton>Start Sharing</ShareButton></Actions>
      </Capture>
      <Notes>
        <Note $drop={20}>
          <UpArrow width="48" height="57"><path d="M24 3L42 21H33.500V62H13.500V21H5z" fill="#4f81bd" stroke="#385d8a" strokeWidth="3" /></UpArrow>
          2) Click “Start Sharing”
        </Note>
        <Note>
          <CornerArrow width="60" height="58"><path d="M5.500 6.500L31 5.500 25.500 12 55 38 42.500 52 13 26 7 32.500z" fill="#4f81bd" stroke="#385d8a" strokeWidth="3" /></CornerArrow>
          1) Position the selection around a window (for example)
        </Note>
      </Notes>
    </Page>
  );
}
